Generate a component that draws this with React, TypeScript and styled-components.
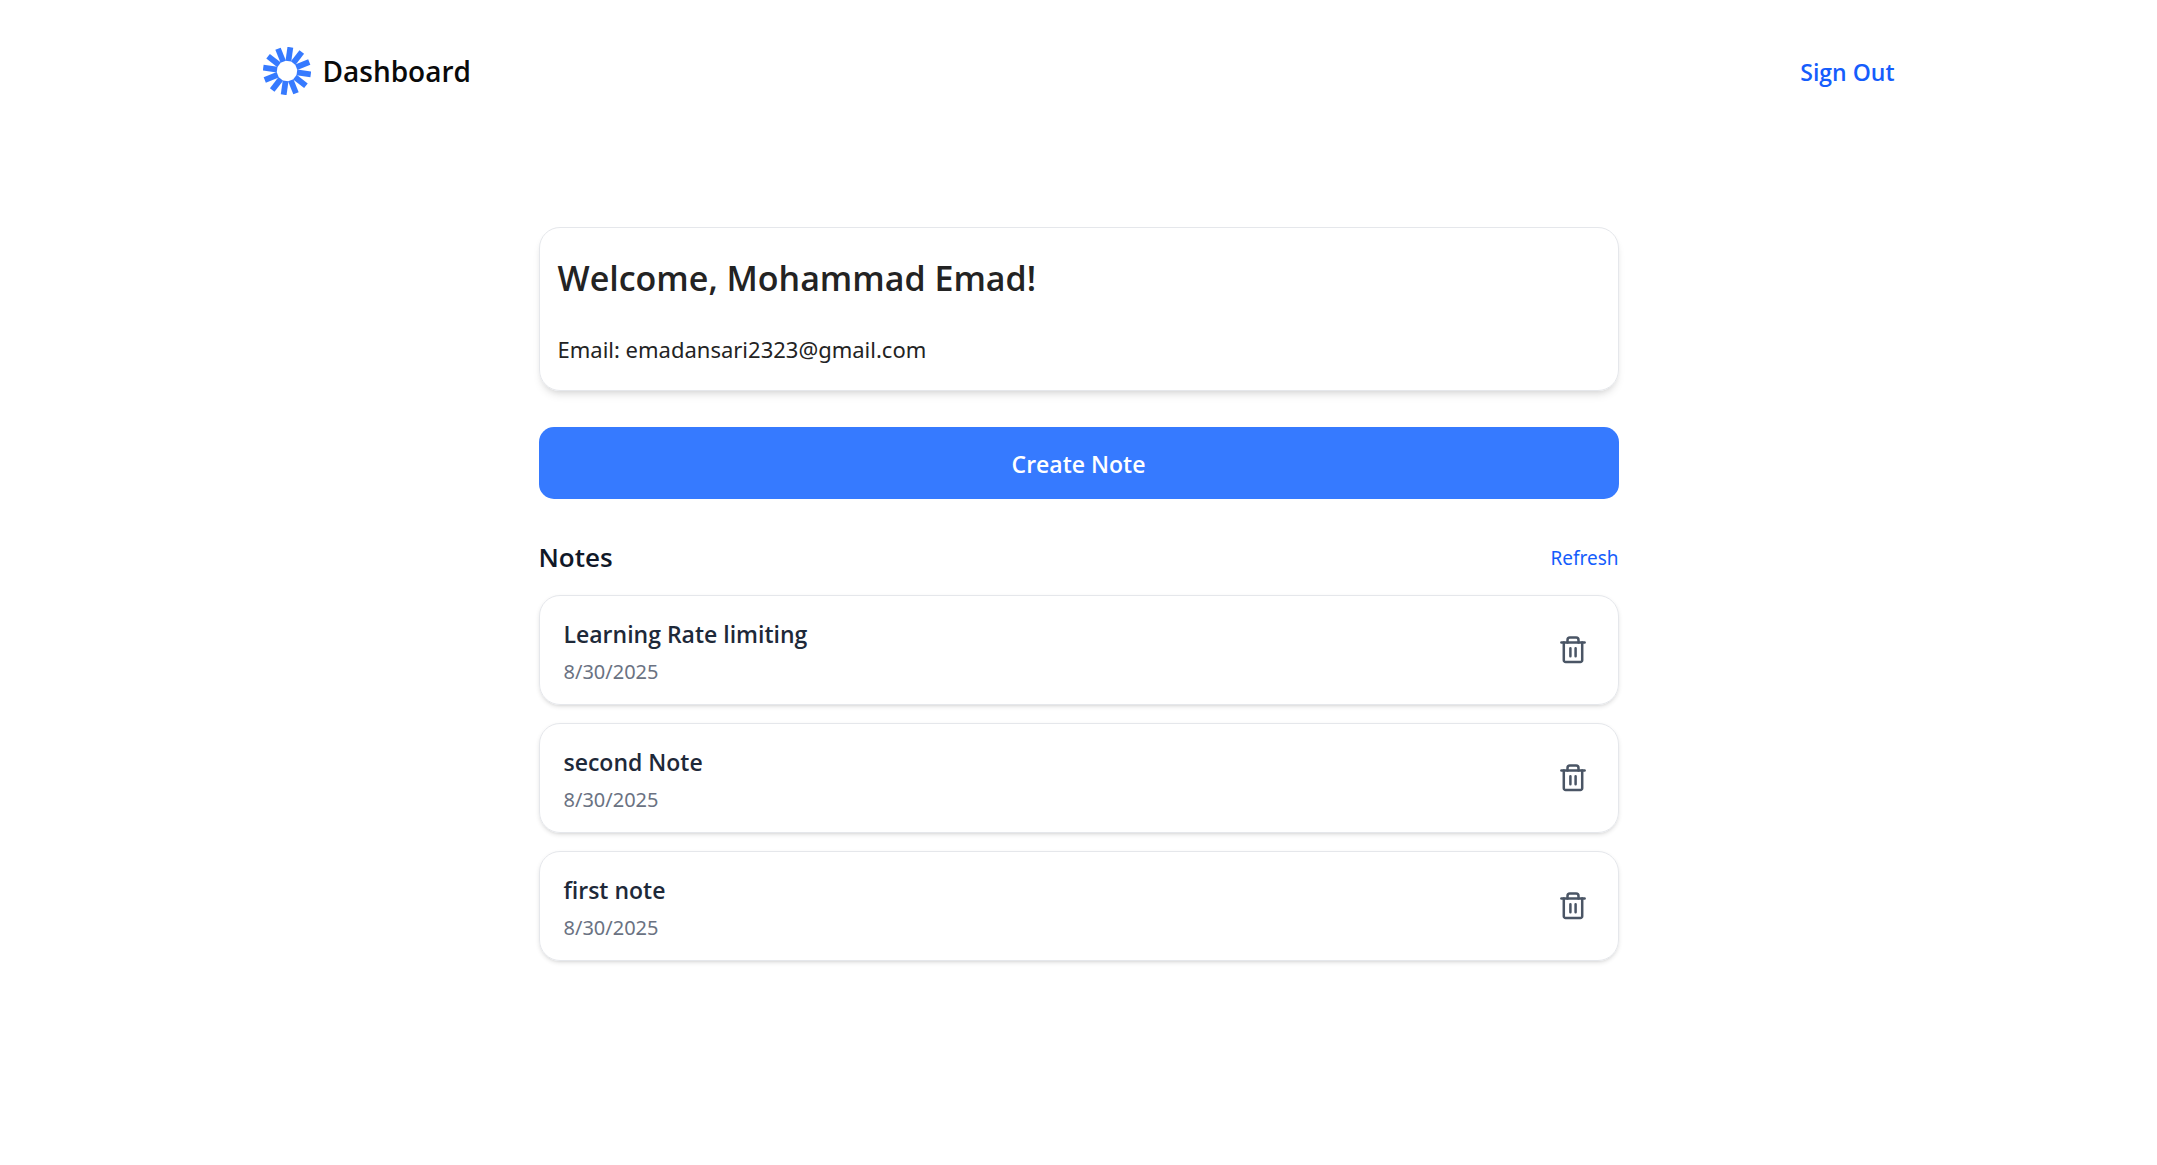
import React, { useState } from "react";
import styled, { createGlobalStyle } from "styled-components";

const GlobalStyle = createGlobalStyle`
  *, *::before, *::after { box-sizing: border-box; }
  body {
    margin: 0;
    background: #ffffff;
    color: #232323;
    font-family: "Noto Sans", "Open Sans", sans-serif;
    font-size: 22px;
  }
  h1, h2, h3, p, ul { margin: 0; padding: 0; }
  h1, h2, h3 { font-family: "Open Sans", "Noto Sans", sans-serif; font-weight: 600; }
`;

const Button = styled.button`
  padding: 0;
  border: 0;
  background: none;
  font-family: "Open Sans", "Noto Sans", sans-serif;
  font-size: 23px;
  font-weight: 600;
  line-height: 36px;
  cursor: pointer;
`;

const Header = styled.header`
  display: flex;
  align-items: center;
  justify-content: space-between;
  max-width: 1680px;
  margin: 0 auto;
  padding: 47px 24px;
`;

const Brand = styled.div`
  display: flex;
  align-items: center;
  gap: 12px;
`;

const PageTitle = styled.h1`
  font-size: 28px;
  line-height: 48px;
  color: #0a0a0a;
`;

const SignOutButton = styled(Button)`
  padding-top: 2px;
  color: #155dfc;
`;

const RefreshButton = styled(Button)`
  padding-top: 2px;
  color: #155dfc;
  font-family: "Noto Sans", "Open Sans", sans-serif;
  font-size: 19px;
  font-weight: 400;
`;

const Main = styled.main`
  display: flex;
  flex-direction: column;
  max-width: 1080px;
  margin: 0 auto;
  padding: 85px 0 48px;
`;

const WelcomeCard = styled.section`
  padding: 24px 18px;
  border: 1px solid #e5e7eb;
  border-radius: 21px;
  box-shadow: 0 6px 9px -2px rgba(0, 0, 0, 0.1), 0 3px 6px -3px rgba(0, 0, 0, 0.1);
`;

const WelcomeTitle = styled.h2`
  margin-bottom: 28px;
  font-size: 34px;
  line-height: 52px;
`;

const Email = styled.p`
  line-height: 34px;
`;

const CreateButton = styled(Button)`
  margin-top: 36px;
  padding: 19px 18px 17px;
  border-radius: 15px;
  background: #367aff;
  color: #ffffff;
`;

const NotesHeader = styled.div`
  display: flex;
  align-items: center;
  justify-content: space-between;
  margin: 39px 0 19px;
`;

const NotesTitle = styled.h2`
  font-size: 26px;
  line-height: 36px;
  color: #101828;
`;

const NoteList = styled.ul`
  display: flex;
  flex-direction: column;
  gap: 18px;
  list-style: none;
`;

const NoteCard = styled.li`
  display: flex;
  align-items: center;
  justify-content: space-between;
  padding: 0 24px;
  border: 1px solid #e5e7eb;
  border-radius: 21px;
  box-shadow: 0 2px 4px rgba(0, 0, 0, 0.1), 0 2px 3px -2px rgba(0, 0, 0, 0.1);
`;

const NoteText = styled.div`
  padding: 20px 0 16px;
`;

const NoteTitle = styled.h3`
  margin-bottom: 4px;
  font-size: 23px;
  line-height: 36px;
  color: #1e2939;
`;

const NoteDate = styled.p`
  font-size: 20px;
  line-height: 32px;
  color: #6a7282;
`;

const IconButton = styled(Button)`
  display: flex;
  padding: 6px;
  color: #4a5565;
`;

const SPOKES = Array.from({ length: 12 }, (_, i) => 8 + i * 30);

function Logo() {
  return (
    <svg width="48" height="48" viewBox="0 0 48 48" aria-hidden="true">
      <g stroke="#367aff" strokeWidth="5.8">
        {SPOKES.map((angle) => (
          <line key={angle} x1="24" y1="0" x2="24" y2="14" transform={`rotate(${angle} 24 24)`} />
        ))}
      </g>
    </svg>
  );
}

function TrashIcon() {
  return (
    <svg
      width="30"
      height="30"
      viewBox="0 0 30 30"
      fill="none"
      stroke="currentColor"
      strokeWidth="2.5"
      strokeLinecap="round"
      strokeLinejoin="round"
      aria-hidden="true"
    >
      <path d="M3.4 7.5h23.2" />
      <path d="M9.5 7.5V5a2.4 2.4 0 0 1 2.4-2.4h6.2A2.4 2.4 0 0 1 20.5 5v2.5" />
      <path d="M5.8 7.5v17.7a1.8 1.8 0 0 0 1.8 1.8h14.8a1.8 1.8 0 0 0 1.8-1.8V7.5" />
      <path d="M12.4 13.2v8M17.6 13.2v8" />
    </svg>
  );
}

type Note = { id: number; title: string; date: string };

const initialNotes: Note[] = [
  { id: 3, title: "Learning Rate limiting", date: "8/30/2025" },
  { id: 2, title: "second Note", date: "8/30/2025" },
  { id: 1, title: "first note", date: "8/30/2025" },
];

export default function App() {
  const [notes, setNotes] = useState(initialNotes);

  return (
    <>
      <GlobalStyle />
      <Header>
        <Brand>
          <Logo />
          <PageTitle>Dashboard</PageTitle>
        </Brand>
        <SignOutButton type="button">Sign Out</SignOutButton>
      </Header>
      <Main>
        <WelcomeCard>
          <WelcomeTitle>Welcome, Mohammad Emad!</WelcomeTitle>
          <Email>Email: emadansari2323@gmail.com</Email>
        </WelcomeCard>
        <CreateButton type="button">Create Note</CreateButton>
        <NotesHeader>
          <NotesTitle>Notes</NotesTitle>
          <RefreshButton type="button" onClick={() => setNotes(initialNotes)}>
            Refresh
          </RefreshButton>
        </NotesHeader>
        <NoteList>
          {notes.map((note) => (
            <NoteCard key={note.id}>
              <NoteText>
                <NoteTitle>{note.title}</NoteTitle>
                <NoteDate>{note.date}</NoteDate>
              </NoteText>
              <IconButton
                type="button"
                aria-label={`Delete ${note.title}`}
                onClick={() => setNotes(notes.filter((n) => n.id !== note.id))}
              >
                <TrashIcon />
              </IconButton>
            </NoteCard>
          ))}
        </NoteList>
      </Main>
    </>
  );
}
